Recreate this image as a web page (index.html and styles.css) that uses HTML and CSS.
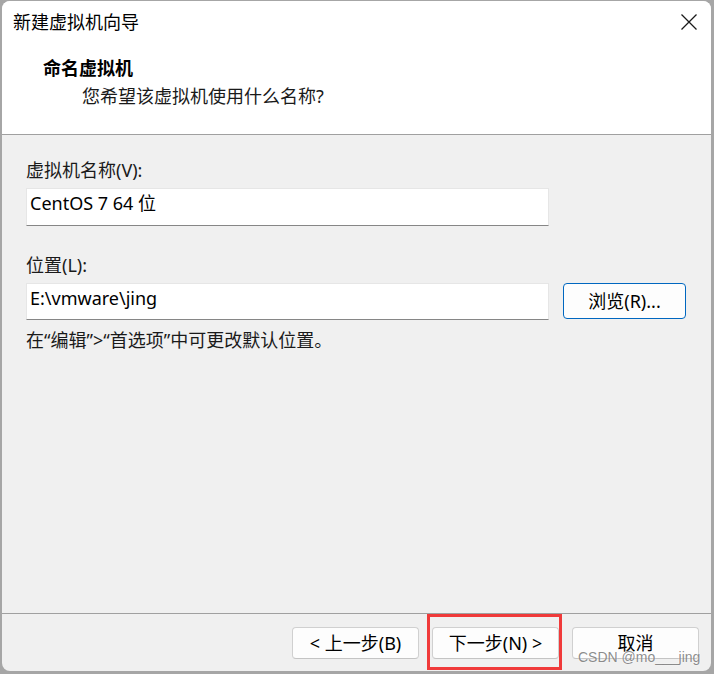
FILE: index.html
```html
<!DOCTYPE html>
<html lang="zh-CN">
<head>
    <meta charset="UTF-8">
    <title>新建虚拟机向导</title>
    <link rel="stylesheet" href="styles.css">
</head>
<body>
    <!-- 向导窗口 -->
    <div class="window">
        <!-- 顶部白色区域：标题栏 + 步骤说明 -->
        <div class="header">
            <div class="titlebar">
                <span class="title">新建虚拟机向导</span>
                <span class="close">
                    <svg width="16" height="16" viewBox="0 0 16 16">
                        <path d="M0.5 0.5 L15.5 15.5 M15.5 0.5 L0.5 15.5" stroke="#1a1a1a" stroke-width="1.3" fill="none"/>
                    </svg>
                </span>
            </div>
            <div class="step-title">命名虚拟机</div>
            <div class="step-desc">您希望该虚拟机使用什么名称?</div>
        </div>

        <!-- 表单内容 -->
        <div class="content">
            <div class="field-label">虚拟机名称(V):</div>
            <div class="text-box">CentOS 7 64 位</div>

            <div class="field-label second">位置(L):</div>
            <div class="path-row">
                <div class="text-box">E:\vmware\jing</div>
                <button class="btn btn-browse">浏览(R)...</button>
            </div>

            <p class="hint">在“编辑”&gt;“首选项”中可更改默认位置。</p>
        </div>

        <!-- 底部按钮 -->
        <div class="footer">
            <button class="btn">&lt; 上一步(B)</button>
            <button class="btn">下一步(N) &gt;</button>
            <button class="btn">取消</button>
        </div>
    </div>

    <!-- 截图上的标注 -->
    <div class="highlight"></div>
    <div class="watermark">CSDN @mo___jing</div>
</body>
</html>
```

FILE: styles.css
```css
* {
    margin: 0;
    padding: 0;
    box-sizing: border-box;
}

body {
    width: 714px;
    height: 674px;
    background: #a6a6a6;
    font-family: "Noto Sans", "Noto Sans CJK SC", sans-serif;
    font-size: 18px;
    color: #111;
    position: relative;
    overflow: hidden;
}

/* 窗口外框 */
.window {
    margin: 1px 0 0 2px;
    width: 709px;
    height: 670px;
    border-radius: 8px;
    overflow: hidden;
    background: #f0f0f0;
    display: flex;
    flex-direction: column;
}

/* 白色头部 */
.header {
    background: #fff;
    height: 134px;
    border-bottom: 1px solid #a0a0a0;
}

.titlebar {
    height: 42px;
    display: flex;
    align-items: center;
    justify-content: space-between;
    padding-left: 11px;
    padding-right: 14px;
}

.title {
    line-height: 42px;
    color: #000;
}

.close {
    display: flex;
    width: 16px;
    height: 16px;
}

.step-title {
    margin-top: 13px;
    padding-left: 41px;
    line-height: 24px;
    font-weight: bold;
    color: #000;
}

.step-desc {
    margin-top: 4px;
    padding-left: 80px;
    line-height: 24px;
    color: #1a1a1a;
}

/* 表单区域 */
.content {
    flex: 1;
    padding: 23px 24px 0;
}

.field-label {
    line-height: 24px;
    color: #1a1a1a;
}

.field-label.second {
    margin-top: 27px;
}

.text-box {
    margin-top: 6px;
    width: 523px;
    height: 38px;
    background: #fff;
    border: 1px solid #e6e6e6;
    border-bottom: 1px solid #868686;
    padding: 2px 0 0 3px;
    line-height: 24px;
    color: #000;
}

.path-row {
    display: flex;
    align-items: flex-start;
    gap: 14px;
    margin-top: 6px;
}

.path-row .text-box {
    margin-top: 0;
    height: 37px;
}

.hint {
    margin-top: 8px;
    line-height: 24px;
    color: #1a1a1a;
}

/* 按钮 */
.btn {
    width: 127px;
    height: 32px;
    background: #fdfdfd;
    border: 1px solid #d0d0d0;
    border-bottom-color: #c4c4c4;
    border-radius: 4px;
    font-family: inherit;
    font-size: 18px;
    line-height: 24px;
    color: #000;
}

.btn-browse {
    width: 123px;
    height: 36px;
    border: 1px solid #0067c0;
}

/* 底部 */
.footer {
    height: 58px;
    border-top: 1px solid #a0a0a0;
    display: flex;
    justify-content: flex-end;
    align-items: flex-start;
    gap: 13px;
    padding: 13px 12px 0 0;
}

/* 红色标注框 */
.highlight {
    position: absolute;
    left: 427px;
    top: 614px;
    width: 135px;
    height: 56px;
    border: 3px solid #f03a3a;
}

/* 水印 */
.watermark {
    position: absolute;
    left: 578px;
    top: 647px;
    font-family: "Liberation Sans", sans-serif;
    font-size: 14px;
    line-height: 20px;
    color: rgba(120, 120, 120, 0.85);
    text-shadow: 0 0 2px rgba(255, 255, 255, 0.8);
}
```
